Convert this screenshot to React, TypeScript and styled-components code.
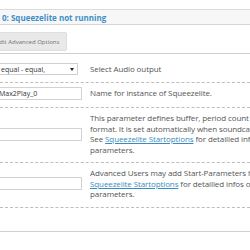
import React from "react";
import styled, { createGlobalStyle } from "styled-components";

const GlobalStyle = createGlobalStyle`
  html, body {
    margin: 0;
    padding: 0;
    background: #ffffff;
    overflow: hidden;
  }
  body {
    font-family: "Open Sans", "Liberation Sans", sans-serif;
    color: #555555;
  }
`;

const Page = styled.div`
  width: 250px;
  height: 250px;
  overflow: hidden;
  padding-top: 9px;
  box-sizing: border-box;
`;

const PanelHeader = styled.div`
  height: 14px;
  border-top: 1px solid #dcdcdc;
  border-bottom: 1px solid #d4d4d4;
  background: #f7f7f7;
  display: flex;
  align-items: center;
  padding-left: 2px;
`;

const Title = styled.span`
  font-weight: 700;
  font-size: 8px;
  color: #3d8fc6;
  white-space: nowrap;
`;

const Toolbar = styled.div`
  display: flex;
  padding: 7px 0 2px;
  border-bottom: 1px solid #d0d0d0;
`;

const Button = styled.div`
  height: 19px;
  box-sizing: border-box;
  margin-left: -12px;
  padding: 0 7px;
  display: flex;
  align-items: center;
  background: #e9e9e9;
  border: 1px solid #dedede;
  border-radius: 2px;
  font-size: 6px;
  color: #707070;
  white-space: nowrap;
`;

const Row = styled.div<{ $pt: number; $pb: number }>`
  display: grid;
  grid-template-columns: 90px 1fr;
  align-items: center;
  padding: ${(p) => p.$pt}px 0 ${(p) => p.$pb}px;
  border-bottom: 1px dashed #bdbdbd;
`;

const Control = styled.div`
  display: flex;
  overflow: visible;
`;

const SelectBox = styled.div`
  width: 82px;
  height: 12px;
  margin-left: -4px;
  box-sizing: border-box;
  border: 1px solid #cfcfcf;
  background: #fff;
  display: flex;
  align-items: center;
  justify-content: space-between;
  padding: 0 3px 0 4px;
  font-size: 7px;
  color: #333;
  white-space: nowrap;
`;

const Arrow = styled.span`
  width: 0;
  height: 0;
  border-left: 2px solid transparent;
  border-right: 2px solid transparent;
  border-top: 3px solid #222;
`;

const TextInput = styled.input`
  width: 87px;
  height: 13px;
  margin: 0 0 0 -5px;
  box-sizing: border-box;
  border: 1px solid #d2d2d2;
  padding: 0 0 0 3px;
  font-family: "Open Sans", "Liberation Sans", sans-serif;
  font-size: 7px;
  color: #333;
  background: #fff;
  outline: none;
`;

const Description = styled.div`
  font-size: 8px;
  line-height: 10.5px;
  color: #555;
  white-space: nowrap;
  letter-spacing: -0.1px;
`;

const Link = styled.a`
  color: #3a8cc0;
  text-decoration: underline;
`;

const Footer = styled.div`
  height: 23px;
  border-bottom: 1px solid #cfcfcf;
`;

export default function App() {
  return (
    <>
      <GlobalStyle />
      <Page>
        <PanelHeader>
          <Title>0: Squeezelite not running</Title>
        </PanelHeader>
        <Toolbar>
          <Button>Edit Advanced Options</Button>
        </Toolbar>
        <Row $pt={9} $pb={7}>
          <Control>
            <SelectBox>
              <span>equal - equal,</span>
              <Arrow />
            </SelectBox>
          </Control>
          <Description>Select Audio output</Description>
        </Row>
        <Row $pt={4} $pb={7}>
          <Control>
            <TextInput defaultValue="Max2Play_0" readOnly />
          </Control>
          <Description>Name for instance of Squeezelite.</Description>
        </Row>
        <Row $pt={5} $pb={7}>
          <Control>
            <TextInput defaultValue="" readOnly />
          </Control>
          <Description>
            This parameter defines buffer, period count and sample
            <br />
            format. It is set automatically when soundcard is changed.
            <br />
            See <Link>Squeezelite Startoptions</Link> for detailled infos on
            <br />
            parameters.
          </Description>
        </Row>
        <Row $pt={5} $pb={7}>
          <Control>
            <TextInput defaultValue="" readOnly />
          </Control>
          <Description>
            Advanced Users may add Start-Parameters here. See
            <br />
            <Link>Squeezelite Startoptions</Link> for detailled infos on all
            <br />
            parameters.
          </Description>
        </Row>
        <Footer />
      </Page>
    </>
  );
}
